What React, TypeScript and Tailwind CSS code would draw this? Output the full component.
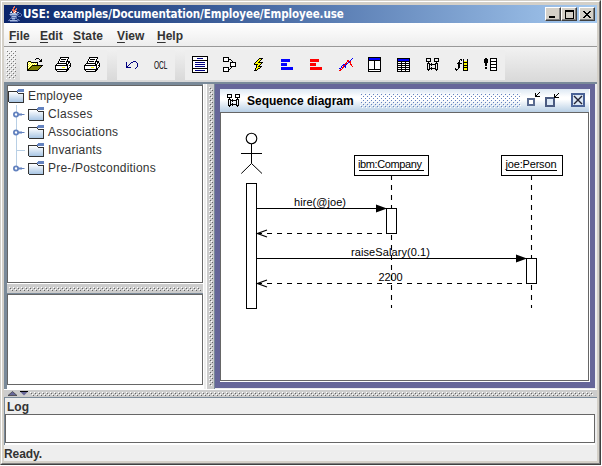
import React from "react";

const palette: Record<string, string> = {
  K: "#000000", W: "#ffffff", Y: "#ffff00", O: "#808000", B: "#0000ff", N: "#000080",
  R: "#ff0000", G: "#c0c0c0", D: "#808080", S: "#5a6fae", L: "#a9bde0", M: "#39468f", P: "#e87058",
  U: "#6382bf", T: "#24364f",
};

/* Small bitmap icon: each character is one pixel of the palette. */
function Pix({ rows, className = "" }: { rows: string[]; className?: string }) {
  const w = Math.max(...rows.map((r) => r.length));
  const h = rows.length;
  return (
    <svg width={w} height={h} viewBox={`0 0 ${w} ${h}`} shapeRendering="crispEdges" className={`block shrink-0 ${className}`}>
      {rows.flatMap((r, y) =>
        [...r].map((c, x) => (palette[c] ? <rect key={`${x}-${y}`} x={x} y={y} width="1" height="1" fill={palette[c]} /> : null)),
      )}
    </svg>
  );
}

/* Embossed dot texture used on grips, dividers and the frame title. */
function Bumps({ id, dark, className = "" }: { id: string; dark: string; className?: string }) {
  return (
    <svg className={`block ${className}`} shapeRendering="crispEdges">
      <defs>
        <pattern id={id} width="4" height="4" patternUnits="userSpaceOnUse">
          <rect x="0" y="0" width="1" height="1" fill="#fff" />
          <rect x="2" y="2" width="1" height="1" fill="#fff" />
          <rect x="1" y="1" width="1" height="1" fill={dark} />
          <rect x="3" y="3" width="1" height="1" fill={dark} />
        </pattern>
      </defs>
      <rect width="100%" height="100%" fill={`url(#${id})`} />
    </svg>
  );
}

const openIcon = [
  ".........KKK....",
  "........K...K.K.",
  ".............KK.",
  ".KKK........KKK.",
  "KYWYKKKKKKK.....",
  "KWYWYWYWYWK.....",
  "KYWYWYWYWYK.....",
  "KWYWYKKKKKKKKKKK",
  "KYWYKOOOOOOOOOK.",
  "KWYKOOOOOOOOOK..",
  "KYKOOOOOOOOOK...",
  "KKOOOOOOOOOK....",
  "KKKKKKKKKKK.....",
];
const printIcon = [
  ".....KKKKKKKKK..",
  ".....KWWWWWWWK..",
  "....KWKKKKKWK...",
  "....KWWWWWWWK...",
  "...KWKKKKKWKKKK.",
  "...KWWWWWWWKWKK.",
  "..KKKKKKKKKKWKWK",
  ".KWWWWWWWWWKKWWK",
  "KKKKKKKKKKKKKWKK",
  "KWWWWWWWWWWWKWWK",
  "KWWWWWWYYYWWKWK.",
  "KWWWWWWWWWWWKK..",
  "KKKKKKKKKKKKKK..",
  ".KWWWWWWWWWKK...",
  "..KKKKKKKKKK....",
];
const undoIcon = [
  ".......NNN..",
  "N....NN...N.",
  "N...N......N",
  "N..N.......N",
  "N.N........N",
  "NN.........N",
  "NNNNN.....N.",
  ".........N..",
];
const classIcon = [
  "KKKKKKKKKKKKKKKK",
  "KWWWWWWWWWWWWWWK",
  "KWWWWNNNNNNWWWWK",
  "KWWWWWWWWWWWWWWK",
  "KKKKKKKKKKKKKKKK",
  "KWWWWWWWWWWWWWWK",
  "KWWNNNNNNNNNNWWK",
  "KWWWWWWWWWWWWWWK",
  "KWWNNNNNNNNNNWWK",
  "KWWWWWWWWWWWWWWK",
  "KWWNNNNNNNNNNWWK",
  "KWWWWWWWWWWWWWWK",
  "KKKKKKKKKKKKKKKK",
  "KWWWWWWWWWWWWWWK",
  "KWWNNNNNNNNNNWWK",
  "KWWWWWWWWWWWWWWK",
  "KKKKKKKKKKKKKKKK",
];
const assocIcon = [
  "KKKKKK.......",
  "KWWWWK.......",
  "KWWWWKKK.....",
  "KWWWWK..K....",
  "KKKKKK...K...",
  ".......KKKKKK",
  ".......KWWWWK",
  ".......KWWWWK",
  ".......KWWWWK",
  ".......KKKKKK",
  "KKKKKK..K....",
  "KWWWWK.K.....",
  "KWWWWKK......",
  "KWWWWK.......",
  "KKKKKK.......",
];
const boltIcon = [
  ".....KKKK.",
  "....KYYK..",
  "...KYYK...",
  "..KYYK....",
  ".KYYKKKKK.",
  "KYYYYYYK..",
  "KKKKYYK...",
  "..KYYK....",
  "..KYKKKK..",
  "..KYYYK...",
  ".KYYKK....",
  ".KYK......",
  "KKK.......",
];
const bars = (c: string) => [
  "CCCCCCCCC...", "CCCCCCCCC...", "CCCCCCCCC...", "............",
  "CCCCCC......", "CCCCCC......", "CCCCCC......", "............",
  "CCCCCCCCCCCC", "CCCCCCCCCCCC", "CCCCCCCCCCCC",
].map((r) => r.replace(/C/g, c));
const chartIcon = [
  ".............B",
  "............B.",
  "........RR.B..",
  "........RRBR..",
  ".......R.BRR..",
  "......RRB..R..",
  "....BBRB...RR.",
  "...BRRB.....R.",
  "..B.RBB......R",
  "..BRR.B.......",
  "BB.R..........",
  ".RR...........",
  "RR............",
];
const viewIcon = [
  "KKKKKKKKKKKKK", "KBBBBBBBBBBBK", "KBBBBBBBBBBBK", "KKKKKKKKKKKKK",
  "KWWWWWKWWWWWK", "KWWWWWKWWWWWK", "KWWWWWKWWWWWK", "KWWWWWKWWWWWK",
  "KWWWWWKWWWWWK", "KWWWWWKWWWWWK", "KWWWWWKWWWWWK", "KWWWWWKWWWWWK",
  "KKKKKKKKKKKKK", "KWWWWWWWWWWWK", "KKKKKKKKKKKKK",
];
const tableIcon = [
  "KKKKKKKKKKKKK", "KBBBBBBBBBBBK", "KBBBBBBBBBBBK", "KKKKKKKKKKKKK",
  "KWWWKWWWKWWWK", "KKKKKKKKKKKKK", "KWWWKWWWKWWWK", "KKKKKKKKKKKKK",
  "KWWWKWWWKWWWK", "KKKKKKKKKKKKK", "KWWWKWWWKWWWK", "KKKKKKKKKKKKK",
  "KWWWKWWWKWWWK", "KKKKKKKKKKKKK",
];
const seqIcon = [
  "KKKKK...KKKKK",
  "K...K...K...K",
  "K...K...K...K",
  "KKKKK...KKKKK",
  "..K.......K..",
  ".KKK.K...KKK.",
  ".K.KKKKKKK.K.",
  ".K.K.K...K.K.",
  ".K.K.....K.K.",
  ".K.K.K...K.K.",
  ".K.KKKKKKK.K.",
  ".KKK.K...KKK.",
  "..K.......K..",
];
const funcIcon = [
  ".....KK.K...K",
  "....K.K.K...K",
  "....K...KYYYK",
  "...KK...KKKKK",
  "..KKKKK.KYYYK",
  "...KK...KYYYK",
  "...KK...KKKKK",
  "...KK...KYYYK",
  "...KK...KKKKK",
  "K..K....KYYYK",
  "KKK.....KYYYK",
  ".K......KKKKK",
];
const exclIcon = [
  ".KK...KKKKKKK",
  "KKKK..KWWWWWK",
  "KKKK..KWWWWWK",
  "KKKK..KKKKKKK",
  "KKKK..KWWWWWK",
  ".KK...KWWWWWK",
  ".KK...KKKKKKK",
  ".KK...KWWWWWK",
  "......KWWWWWK",
  ".KK...KKKKKKK",
  ".KK...KWWWWWK",
  "......KWWWWWK",
  "......KKKKKKK",
];
const javaIcon = [
  ".......P........",
  "......PP........",
  "......P..P......",
  ".....PP.PP......",
  ".....PPPP.......",
  "....L.PPWP......",
  "...LW.PWP.LL....",
  "...SSLLLLSS.SS..",
  "..SLLLLLLLSS..S.",
  "...SSSSSSSS...S.",
  "....SLLLLS.SSS..",
  "....SSSSSS......",
  "...SSLLLSS......",
  "..S..SSS..SS....",
  ".SSLLLLLLLSSS...",
  "...SSSSSSSS.....",
];

function Tool({ rows, w }: { rows: string[]; w: string }) {
  return (
    <button className={`flex h-[29px] shrink-0 items-center justify-center ${w}`}>
      <Pix rows={rows} />
    </button>
  );
}

function MenuItem({ label, className }: { label: string; className: string }) {
  return (
    <span className={`whitespace-nowrap ${className}`}>
      <span className="underline underline-offset-2">{label[0]}</span>
      {label.slice(1)}
    </span>
  );
}

function Folder({ id }: { id: string }) {
  return (
    <svg width="17" height="14" viewBox="0 0 17 14" shapeRendering="crispEdges" className="block shrink-0">
      <defs>
        <linearGradient id={id} x1="0" y1="0" x2="0" y2="1">
          <stop offset="0" stopColor="#fff" />
          <stop offset="1" stopColor="#a9c6e4" />
        </linearGradient>
      </defs>
      <rect x="1" y="3" width="14" height="10" fill={`url(#${id})`} />
      <path d="M0.5 13V2.5H8.5L10.5 4.5H15.5V13.5H0.5" fill="none" stroke="#333" />
      <path d="M10 0h6v3h-7v-2h1z" fill="#6382bf" />
    </svg>
  );
}

function Handle() {
  return (
    <svg width="12" height="7" viewBox="0 0 12 7" className="block">
      <circle cx="3" cy="3.5" r="2.1" fill="#fff" stroke="#6382bf" strokeWidth="1.8" />
      <path d="M5 2.5H9V3H11.5V4H9V4.5H5Z" fill="#6382bf" />
    </svg>
  );
}

function TreeRow({ label, leaf, cls }: { label: string; leaf?: boolean; cls: string }) {
  return (
    <div className="flex h-[18px] items-center">
      <div className="flex h-[18px] w-5 shrink-0 items-center pl-[5px]">
        {leaf ? <div className="ml-[3px] h-px w-[9px] bg-[#b8cfe5]" /> : <Handle />}
      </div>
      <Folder id={`folder-${label[0]}`} />
      <span className={`ml-[3px] whitespace-nowrap ${cls}`}>{label}</span>
    </div>
  );
}

function Diagram() {
  return (
    <svg width="367" height="267" viewBox="221 113 367 267" className="block" fill="none" stroke="#000" fontFamily="Liberation Sans, Arial, sans-serif" fontSize="11">
      <circle cx="251.5" cy="138.5" r="5.3" strokeWidth="1.1" />
      <path d="M251.5 144V163.5M241 153.5H262M241.3 173.5L251.5 163.5L262 173.5" />
      <g strokeDasharray="5 5">
        <path d="M391.5 175V308M531.5 175V308" strokeWidth="1.1" />
        <path d="M257 233.5H386M257 283.5H526" />
      </g>
      <g fill="#fff">
        <rect x="246.5" y="183.5" width="10" height="125" />
        <rect x="354.5" y="155.5" width="74" height="20" />
        <rect x="501.5" y="155.5" width="61" height="20" />
        <rect x="386.5" y="208.5" width="10" height="25" />
        <rect x="526.5" y="258.5" width="10" height="25" />
      </g>
      <path d="M257 208.5H386M257 258.5H526M359 170.5H424M506 170.5H557" />
      <path d="M376 204.5V212.5L387 208.5ZM516 254.5V262.5L527 258.5Z" fill="#000" stroke="none" />
      <path d="M267 230L257.5 233.5L267 237M267 280L257.5 283.5L267 287" strokeWidth="1.3" />
      <g fill="#000" stroke="none">
        <text x="358" y="168" textLength="64">ibm:Company</text>
        <text x="505.5" y="168" textLength="51">joe:Person</text>
        <text x="294" y="206" textLength="52">hire(@joe)</text>
        <text x="351" y="256" textLength="79">raiseSalary(0.1)</text>
        <text x="378.5" y="281" textLength="24">2200</text>
      </g>
    </svg>
  );
}

const caption = "flex h-[14px] w-4 items-center justify-center border border-t-white border-l-white border-r-[#404040] border-b-[#404040] bg-[#d4d0c8] shadow-[inset_-1px_-1px_0_#808080]";

export default function App() {
  return (
    <div className="h-[466px] w-[602px] overflow-hidden bg-white font-['Liberation_Sans',Arial,sans-serif] text-[12px] text-[#333]">
      <div className="h-[465px] w-[601px] border border-t-[#d4d0c8] border-r-[#404040] border-b-[#404040] border-l-[#d4d0c8]">
        <div className="h-full border border-t-white border-r-[#808080] border-b-[#808080] border-l-white bg-[#d4d0c8] px-[2px] pt-[3px] pb-[2px]">
          <div className="flex h-full flex-col overflow-hidden bg-[#eee]">
            <header className="flex h-[18px] shrink-0 items-center bg-linear-to-r from-[#0a246a] to-[#a6caf0] pr-[2px] pl-[3px]">
              <Pix rows={javaIcon} />
              <h1 className="grow whitespace-nowrap font-['DejaVu_Sans_Condensed','DejaVu_Sans',sans-serif] text-[11.5px] leading-[18px] font-bold tracking-[-0.08px] text-white [font-stretch:condensed]">
                USE: examples/Documentation/Employee/Employee.use
              </h1>
              <div className="flex">
                <div className={caption}><div className="mt-[6px] mr-[3px] h-[2px] w-[6px] bg-black" /></div>
                <div className={caption}><div className="h-[9px] w-[9px] border border-t-2 border-black" /></div>
                <div className={`ml-[2px] ${caption}`}>
                  <Pix rows={["KK....KK", ".KK..KK.", "..KKKK..", "...KK...", "..KKKK..", ".KK..KK.", "KK....KK"]} />
                </div>
              </div>
            </header>

            <nav className="flex h-6 shrink-0 items-center border-b border-[#999] bg-linear-to-b from-white to-[#ededed] pt-[2px] pl-[5px] font-bold">
              <MenuItem label="File" className="w-[31px]" />
              <MenuItem label="Edit" className="w-[33px]" />
              <MenuItem label="State" className="w-[44px] tracking-[0.15px]" />
              <MenuItem label="View" className="w-[40px] tracking-[0.1px]" />
              <MenuItem label="Help" className="" />
            </nav>

            <div className="flex h-[35px] shrink-0 items-start bg-linear-to-b from-[#f2f2f2] to-[#d8d8d8] pt-[3px] pl-[2px]">
              <Bumps id="grip" dark="#777" className="h-[29px] w-[10px]" />
              <div className="ml-1 flex h-[30px] w-[87px] bg-[#eee]">
                <Tool rows={openIcon} w="w-[30px]" />
                <Tool rows={printIcon} w="w-[26px]" />
                <Tool rows={printIcon} w="w-[32px]" />
              </div>
              <div className="ml-[10px] flex h-[30px] w-[58px] items-center bg-[#eee]">
                <Tool rows={undoIcon} w="w-[30px]" />
                <svg width="28" height="30" className="block">
                  <text x="7" y="18.5" fontSize="11.5" textLength="13.5" lengthAdjust="spacingAndGlyphs" fill="#000" fontFamily="Liberation Sans, Arial, sans-serif">OCL</text>
                </svg>
              </div>
              <div className="ml-[10px] flex h-[30px] w-[320px] bg-[#eee]">
                <Tool rows={classIcon} w="w-[30px]" />
                <Tool rows={assocIcon} w="w-[29px]" />
                <Tool rows={boltIcon} w="w-[30px]" />
                <Tool rows={bars("B")} w="w-[26px]" />
                <Tool rows={bars("R")} w="w-[32px]" />
                <Tool rows={chartIcon} w="w-[28px]" />
                <Tool rows={viewIcon} w="w-[29px]" />
                <Tool rows={tableIcon} w="w-[29px]" />
                <Tool rows={seqIcon} w="w-[29px]" />
                <Tool rows={funcIcon} w="w-[29px]" />
                <Tool rows={exclIcon} w="w-[29px]" />
              </div>
            </div>

            <main className="flex h-[307px] shrink-0 border-t-2 border-[#7a8a99] bg-[#eee]">
              <aside className="flex w-[199px] shrink-0 flex-col border-l-[3px] border-[#7a8a99]">
                <div className="h-px bg-[#7a8a99]" />
                <section className="relative h-[198px] border border-[#666] bg-white pt-px">
                  <div className="absolute top-[19px] left-[8px] h-[64px] w-px bg-[#b8cfe5]" />
                  <div className="relative">
                    <div className="flex h-[18px] items-center">
                      <Folder id="folder-root" />
                      <span className="ml-[3px] tracking-[0.15px]">Employee</span>
                    </div>
                    <TreeRow label="Classes" cls="tracking-[0.3px]" />
                    <TreeRow label="Associations" cls="tracking-[0.25px]" />
                    <TreeRow label="Invariants" leaf cls="tracking-[0.2px]" />
                    <TreeRow label="Pre-/Postconditions" cls="tracking-[0.2px]" />
                  </div>
                </section>
                <div className="flex h-[11px] items-center border-t border-b border-t-white border-b-[#7a8a99] bg-[#ccc] pl-[2px]">
                  <Bumps id="hsplit" dark="#666" className="h-[4px] w-[192px]" />
                </div>
                <section className="h-[91px] border border-[#666] bg-white" />
                <div className="grow bg-white" />
              </aside>
              <div className="w-[3px] border-l border-white bg-[#eee]" />
              <div className="flex w-[9px] justify-center border-r border-l border-l-white border-r-[#7a8a99] bg-[#ccc] py-[3px]">
                <Bumps id="vsplit" dark="#666" className="h-full w-[4px]" />
              </div>
              <section className="mb-[1px] w-[380px] bg-[#669] pt-[5px] pr-[5px] pb-[5px] pl-[5px]">
                <div className="flex h-[293px] w-[370px] flex-col border-r border-b border-white">
                  <div className="flex h-[23px] shrink-0 items-center bg-[linear-gradient(#dde8f3,#fff_35%,#fff_45%,#b8cfe5)] pr-1 pl-[7px]">
                    <Pix rows={seqIcon} />
                    <h2 className="ml-[7px] w-[113px] shrink-0 whitespace-nowrap text-[12px] font-bold text-black">Sequence diagram</h2>
                    <Bumps id="frame" dark="#6382bf" className="h-[15px] w-[161px] shrink-0" />
                    <svg width="34" height="17" viewBox="526 90 34 17" fill="none" shapeRendering="crispEdges" className="mb-[2px] ml-[5px] block shrink-0">
                      <rect x="528" y="98" width="6" height="6" stroke="#5a6b90" strokeWidth="2" />
                      <rect x="529" y="99" width="4" height="4" fill="#fff" />
                      <rect x="546" y="97" width="8" height="8" stroke="#4a5a80" strokeWidth="2" fill="#dce8f5" />
                      <path d="M535.5 91.5V95.5H539.5M536 95L539.5 91.5M554.5 92.5V96.5H558.5M555 96L558.5 92.5" stroke="#000" />
                    </svg>
                    <svg width="14" height="14" viewBox="0 0 14 14" className="mb-[1px] ml-[11px] block shrink-0">
                      <rect x="1" y="1" width="12" height="12" fill="#dce8f5" stroke="#4a6296" strokeWidth="2" />
                      <path d="M3 3L11 11M11 3L3 11" stroke="#223" strokeWidth="1.4" />
                    </svg>
                  </div>
                  <div className="grow border border-[#666] bg-white">
                    <Diagram />
                  </div>
                </div>
              </section>
            </main>

            <div className="flex h-[9px] shrink-0 items-center border-t border-b border-t-white border-b-[#7a8a99] bg-[#ccc] pr-1 pl-1">
              <svg width="22" height="5" viewBox="0 0 22 5" className="block shrink-0">
                <path d="M0 4.5L4.5 0.5L9 4.5Z" fill="#669" stroke="#333" strokeWidth=".7" />
                <path d="M12 0.5H20L16 4.5Z" fill="#669" />
                <path d="M12 0.5H20" stroke="#000" />
              </svg>
              <Bumps id="bsplit" dark="#666" className="h-[4px] grow" />
            </div>
            <section className="h-[47px] shrink-0 border-l border-[#7a8a99] pr-[2px]">
              <h3 className="h-4 pl-[2px] text-[12px] leading-[18px] font-bold">Log</h3>
              <div className="h-[29px] border border-[#666] bg-white" />
              <div className="h-[2px] bg-white" />
            </section>
            <footer className="grow text-[12px] leading-[19px] font-bold tracking-[-0.1px]">Ready.</footer>
          </div>
        </div>
      </div>
    </div>
  );
}
